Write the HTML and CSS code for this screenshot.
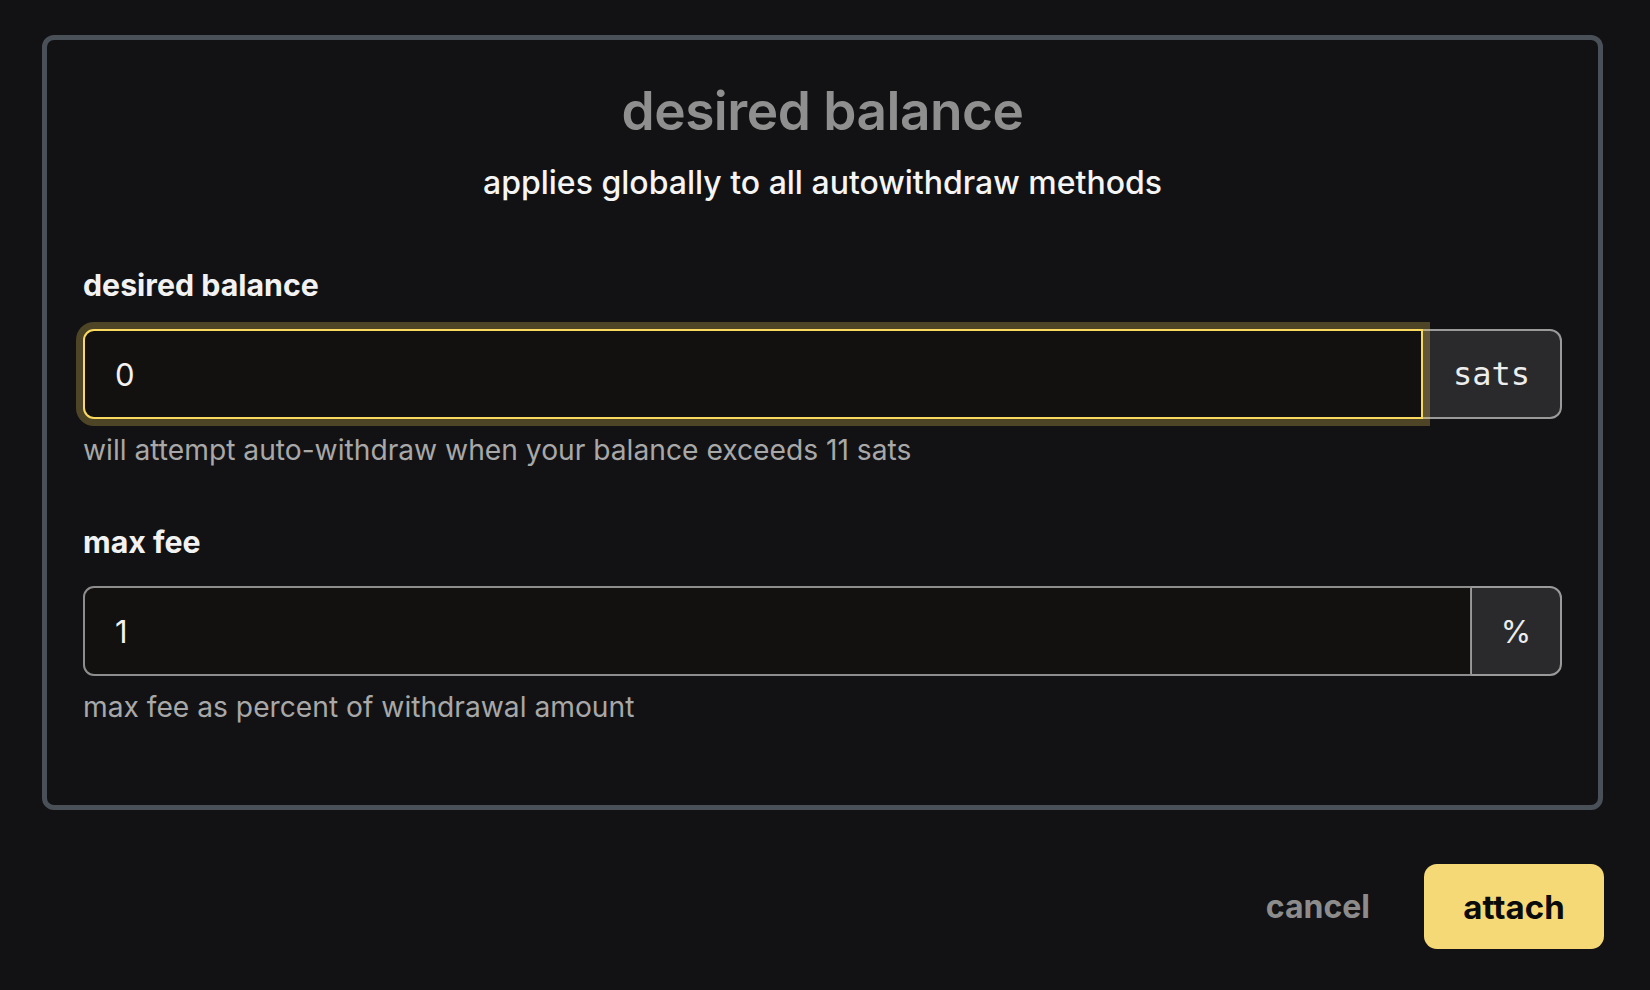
FILE: index.html
```html
<!DOCTYPE html>
<html lang="en">
<head>
    <meta charset="UTF-8">
    <meta name="viewport" content="width=device-width, initial-scale=1.0">
    <title>desired balance</title>
    <link rel="stylesheet" href="styles.css">
</head>
<body>
    <div class="modal">
        <h2 class="title">desired balance</h2>
        <p class="subtitle">applies globally to all autowithdraw methods</p>

        <label class="field-label" for="desired-balance">desired balance</label>
        <div class="input-group">
            <input type="text" class="field-input focused" id="desired-balance" value="0" inputmode="numeric">
            <span class="addon addon-mono">sats</span>
        </div>
        <div class="hint">will attempt auto-withdraw when your balance exceeds 11 sats</div>

        <label class="field-label second" for="max-fee">max fee</label>
        <div class="input-group">
            <input type="text" class="field-input" id="max-fee" value="1" inputmode="numeric">
            <span class="addon addon-pct">%</span>
        </div>
        <div class="hint">max fee as percent of withdrawal amount</div>
    </div>

    <div class="actions">
        <button class="btn-link">cancel</button>
        <button class="btn-primary">attach</button>
    </div>
</body>
</html>
```

FILE: styles.css
```css
body {
    margin: 0;
    background: #121214;
    color: #f0f0f0;
    font-family: Inter, "Noto Sans", sans-serif;
}
.modal {
    margin: 35px 47px 0 42px;
    border: 5px solid #4a5058;
    border-radius: 12px;
    padding: 40px 36px 80px;
    display: flex;
    flex-direction: column;
}
.title {
    margin: 0;
    text-align: center;
    font-size: 53.2px;
    line-height: 62px;
    font-weight: 600;
    color: #8f8f8f;
    letter-spacing: -0.5px;
}
.subtitle {
    margin: 21px 0 0;
    text-align: center;
    font-size: 32px;
    line-height: 40px;
    font-weight: 500;
    color: #f5f5f5;
}
.field-label {
    margin-top: 64px;
    font-size: 30.3px;
    line-height: 36px;
    font-weight: 700;
    color: #f2f2f2;
}
.field-label.second { margin-top: 56px; }
.input-group {
    margin-top: 26px;
    display: flex;
    height: 90px;
}
.field-input {
    flex: 1;
    min-width: 0;
    box-sizing: border-box;
    height: 100%;
    margin: 0;
    padding: 0 30px;
    background: #12110f;
    border: 2px solid #8d8d8d;
    border-right-width: 1px;
    border-radius: 11px 0 0 11px;
    color: #f2f2f2;
    font-family: inherit;
    font-size: 31px;
    outline: none;
}
.field-input.focused {
    position: relative;
    z-index: 1;
    border: 2px solid #fada5e;
    box-shadow: 0 0 0 7px rgba(250, 218, 94, 0.26);
}
.addon {
    display: flex;
    align-items: center;
    justify-content: center;
    box-sizing: border-box;
    background: #2a2a2d;
    border: 2px solid #9a9a9a;
    border-left: 1px solid #9a9a9a;
    border-radius: 0 12px 12px 0;
    color: #ededed;
}
.addon-mono {
    width: 139px;
    font-family: "DejaVu Sans Mono", "Liberation Mono", monospace;
    font-size: 32px;
    border-left: none;
}
.addon-pct {
    width: 91px;
    font-size: 31px;
}
.hint {
    margin-top: 13px;
    font-size: 28.2px;
    line-height: 36px;
    color: #a8a8a8;
}
.actions {
    display: flex;
    justify-content: flex-end;
    align-items: center;
    gap: 54px;
    margin: 54px 46px 0 0;
}
.btn-link {
    background: none;
    border: none;
    padding: 0;
    font-family: inherit;
    font-size: 32px;
    font-weight: 700;
    color: #8c8c8c;
    cursor: pointer;
}
.btn-primary {
    width: 180px;
    height: 85px;
    border: none;
    border-radius: 13px;
    background: #f6d977;
    color: #0b0b0b;
    font-family: inherit;
    font-size: 33px;
    font-weight: 700;
    cursor: pointer;
}
```
